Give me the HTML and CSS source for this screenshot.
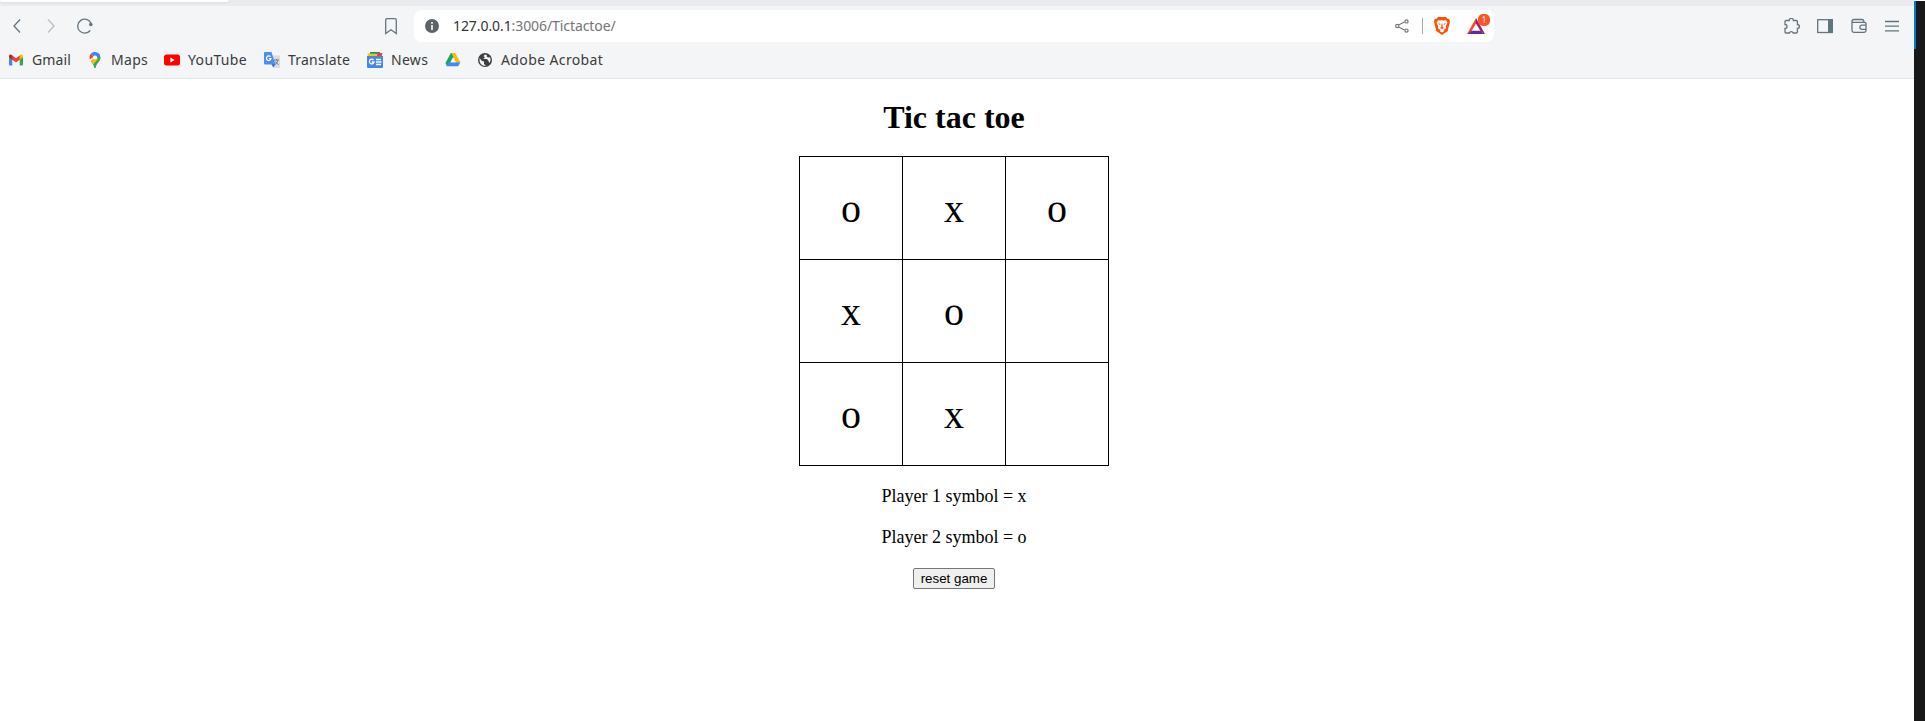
FILE: index.html
```html
<!DOCTYPE html>
<html lang="en">
<head>
<meta charset="utf-8">
<title>Tic tac toe</title>
<link rel="stylesheet" href="styles.css">
</head>
<body>
<div class="screen">
  <div class="window">
    <div class="tabstrip"><div class="tab"></div></div>
    <div class="toolbar">
      <div class="nav">
        <svg class="ic" width="8" height="16" viewBox="0 0 8 16"><path d="M7 1.500 1 8l6 6.500"/></svg>
        <svg class="ic faded" width="8" height="16" viewBox="0 0 8 16"><path d="M1 1.500l6 6.500-6 6.500"/></svg>
        <svg class="ic" width="17" height="16" viewBox="0 0 17 16"><path d="M13.200 12.500A7 7 0 1 1 14 5"/><circle class="solid" cx="13.800" cy="6.500" r="1.800"/></svg>
      </div>
      <svg class="ic save" width="12" height="17" viewBox="0 0 12 17"><path d="M.7 2.200q0-1.500 1.500-1.500h7.600q1.500 0 1.500 1.500V15.500L6 11.700.7 15.500z"/></svg>
      <div class="address">
        <svg class="info" width="14" height="14" viewBox="0 0 14 14"><circle cx="7" cy="7" r="7" fill="#5f6368"/><path d="M7 6v5M7 3v1.700" stroke="#fff" stroke-width="1.600"/></svg>
        <div class="url"><span class="host">127.0.0.1</span>:3006/Tictactoe/</div>
        <svg class="share" width="14" height="14" viewBox="0 0 14 14"><path d="M3.500 6 9.500 3M3.500 8l6 3"/><circle cx="2.200" cy="7" r="1.600"/><circle cx="11.500" cy="2.400" r="1.600"/><circle cx="11.500" cy="11.600" r="1.600"/></svg>
        <div class="divider"></div>
        <svg class="brave" width="16" height="18" viewBox="0 0 16 18"><path fill="#ff5000" d="M4 0h8l1.500 1.800L15.200 2l.8 3-.6 2-1.600 7L8 18l-5.800-4L.6 7 0 5l.8-3 1.700-.2z"/><path fill="#fff" d="m4 3.200 2.500.4L8 3.300l1.500.3 2.500-.4L13.500 5.800l-1.700 3.400.4 2-2.700 1.800.8 1L8 15.400 5.700 14l.8-1-2.700-1.800.4-2-1.700-3.400z"/><path fill="#ff5000" d="m4 6.300 2.500.5-.5 1.300zM12 6.300l-2.500.5.500 1.300zM7.600 6.500h.8l.3 3.500 1.300.9-2 1-2-1 1.300-.9z"/></svg>
        <div class="rewards">
          <svg width="18" height="16" viewBox="0 0 18 16"><path fill="#ff4724" d="M9 0 0 16l4.500-3L9 5.500z"/><path fill="#9e1f63" d="m9 0 9 16-4.500-3L9 5.500z"/><path fill="#662d91" d="M0 16h18l-4.500-3.200h-9z"/></svg>
          <span class="badge">1</span>
        </div>
      </div>
      <div class="actions">
        <svg class="ic" width="16" height="16" viewBox="0 0 16 16"><path d="M1 3.500q0-1 1-1h3.200a2.100 2.100 0 0 1 4.200 0h3q1 0 1 1v3a2 2 0 0 1 0 4v3.500q0 1-1 1H9.200a2 2 0 0 0-3.800 0H2q-1 0-1-1v-3.500a2 2 0 0 0 0-4z"/></svg>
        <svg class="ic panel" width="16" height="16" viewBox="0 0 16 16"><rect x=".7" y="1.700" width="14.600" height="12.800"/><path class="solid" d="M11 1h5v14h-5z"/></svg>
        <svg class="ic" width="16" height="16" viewBox="0 0 16 16"><path d="M12.800 4.300V3.500q0-2-2-2H3q-2 0-2 2v9q0 1.800 1.800 1.800h10.400q1.800 0 1.800-1.800V5.800q0-1.500-1.500-1.500H1.300M15 7.200h-4a2.100 2.100 0 0 0 0 4.200h4"/></svg>
        <svg class="ic" width="14" height="16" viewBox="0 0 14 16"><path d="M0 3.500h14M0 8.200h14M0 12.800h14"/></svg>
      </div>
    </div>
    <div class="bookmarks">
      <div class="bm gmail">
        <svg width="16" height="16" viewBox="0 0 16 16"><path fill="#4285f4" d="M1 4l3.300 2.500V13.500H2q-1 0-1-1z"/><path fill="#34a853" d="M15 4l-3.300 2.500V13.500H14q1 0 1-1z"/><path fill="#ea4335" d="M4 3.200 8 6.200l4-3v4.300l-4 3-4-3z"/><path fill="#c5221f" d="M1 4.500c0-2.200 1.700-2.500 3.300-1.100v4.300L1 5.300z"/><path fill="#fbbc04" d="M15 4.500c0-2.200-1.700-2.500-3.300-1.100v4.300L15 5.300z"/></svg>
        <span>Gmail</span>
      </div>
      <div class="bm maps">
        <svg width="14" height="16" viewBox="0 0 14 16"><path fill="#34a853" d="M12.500 5.500c0 4-4 5.500-4.700 10q-.3 1-.8 1t-.8-1C5.900 12.500 4 11 2.800 9.200l8.700-7z"/><path fill="#fbbc04" d="M2.800 9.200 8.500 3.500 10 7l-4.600 5.300z"/><path fill="#ea4335" d="M2.800 1.800 6 4.500 1.900 7.500C1.200 5 1.500 3.300 2.800 1.800z"/><path fill="#4285f4" d="M2.800 1.800C5-.8 10.400-.6 12 3.200L8.500 7 5 4z"/><circle cx="7" cy="5.500" r="2.100" fill="#fff"/></svg>
        <span>Maps</span>
      </div>
      <div class="bm youtube">
        <svg width="16" height="16" viewBox="0 0 16 16"><rect y="2.500" width="16" height="11" rx="2.500" fill="red"/><path fill="#fff" d="m6.400 5.600 4.200 2.400-4.200 2.400z"/></svg>
        <span>YouTube</span>
      </div>
      <div class="bm translate">
        <svg width="16" height="16" viewBox="0 0 16 16"><path fill="#dadce0" d="M7 3.500h8q1 0 1 1V15q0 1-1 1H9.500z"/><path fill="#3a5bc0" d="M7.500 12h4L9.300 15.500z"/><path fill="#4e8df5" d="M1 0h6.500l4 12.500H1q-1 0-1-1V1q0-1 1-1z"/><path fill="none" stroke="#fff" stroke-width="1.200" d="M6.500 4.700A2.300 2.300 0 1 0 7 6.700H4.800"/><path fill="none" stroke="#747b83" d="M10 8h5M12.500 7v1M14 8q-.5 3-3 4.500M11.500 9.500q1 2 3 3"/></svg>
        <span>Translate</span>
      </div>
      <div class="bm news">
        <svg width="16" height="16" viewBox="0 0 16 16"><path fill="#0c9d58" d="M3 0h10v5H3z"/><path fill="#ea4335" d="M10 1h5.500L14.500 5H9z"/><path fill="#ffc107" d="M.5 1.500 10 1.800V5H1z"/><path fill="#4285f4" d="M0 4h16v11q0 1-1 1H1q-1 0-1-1z"/><path fill="none" stroke="#fff" stroke-width="1.300" d="M6.500 8A2.300 2.300 0 1 0 7 10H4.800M9 7.500h5M9 10h5.500M9 12.500h5"/></svg>
        <span>News</span>
      </div>
      <div class="bm drive">
        <svg width="16" height="16" viewBox="0 0 16 16"><path fill="#1ea362" d="M5.500 1.500q.4-.5 1-.5h2L9 4.500 4 14.300l-2.500-.8-1-2.500z"/><path fill="#ffba00" d="M6.500 1h3q.6 0 1 .6l4.800 8.600h-4.500z"/><path fill="#4688f4" d="M3.500 10.200h11.800l-1.800 3.500q-.4.600-1 .6H2.300q-.5-.1-.8-.6z"/><path fill="#fff" d="m8 5.500 2.700 4.700H5.300z"/></svg>
      </div>
      <div class="bm adobe">
        <svg width="16" height="16" viewBox="0 0 16 16"><circle cx="8" cy="8" r="7" fill="#3c4043"/><path fill="#f3f5f7" d="M2.500 6 5 9l2 .5V12l2 1.500q-4.500 1-6.300-3.500zM8 2.500 6.500 4 8 5.500 6 7h4l1.500 2 1 2.200q2-3 .6-6L11 5.500 9.500 4.200 10 3z"/></svg>
        <span>Adobe Acrobat</span>
      </div>
    </div>
    <main class="page">
      <h1>Tic tac toe</h1>
      <div class="board">
        <div class="cell">o</div><div class="cell">x</div><div class="cell">o</div>
        <div class="cell">x</div><div class="cell">o</div><div class="cell"></div>
        <div class="cell">o</div><div class="cell">x</div><div class="cell"></div>
      </div>
      <p>Player 1 symbol = x</p>
      <p>Player 2 symbol = o</p>
      <button class="reset">reset game</button>
    </main>
  </div>
  <div class="edge"><div class="edge-mark"></div></div>
</div>
</body>
</html>
```
FILE: styles.css
```css
* { box-sizing: border-box; }
body { margin: 0; background: #fff; overflow: hidden; }
svg { display: block; flex: none; }
.screen { display: flex; width: 1925px; height: 721px; }
.window { width: 1914px; display: flex; flex-direction: column; }
.tabstrip { height: 6px; background: #e9ebef; }
.tab { width: 229px; height: 2px; background: #fff; border-radius: 0 0 4px 4px; box-shadow: 0 0 3px #cfd2d6; }
.toolbar { height: 40px; background: #f3f5f7; display: flex; align-items: center; }
.nav { display: flex; align-items: center; width: 380px; padding-left: 13px; gap: 26px; }
.nav .ic:last-child { margin-left: -4px; }
.ic { fill: none; stroke: #62757e; stroke-width: 1.3; }
.ic .solid { fill: #62757e; stroke: none; }
.faded { opacity: .4; }
.save { margin-left: 5px; margin-right: 17px; }
.address { width: 1080px; height: 32px; background: #fff; border-radius: 8px; display: flex; align-items: center; padding-left: 11px; font: 14px "Noto Sans", sans-serif; color: #757575; }
.url { margin-left: 14px; width: 942px; letter-spacing: -.08px; padding-bottom: 1px; }
.host { color: #333; }
.share { fill: none; stroke: #777; stroke-width: 1.2; }
.divider { width: 1px; height: 16px; background: #aaa; margin: 0 11px 0 13px; }
.rewards { position: relative; margin-left: 17px; }
.badge { position: absolute; left: 11px; top: -4px; width: 12px; height: 12px; border-radius: 5px; background: #fb542b; color: #fff; font: 8px/12px "Noto Sans", sans-serif; text-align: center; }
.actions { display: flex; align-items: center; margin-left: 290px; gap: 18px; }
.panel { margin-left: -1px; }
.bookmarks { height: 33px; background: #f3f5f7; border-bottom: 1px solid #e4e7ea; display: flex; padding: 0 0 5px 8px; }
.bm { display: flex; align-items: center; gap: 8px; font: 14px "Noto Sans", sans-serif; color: #3b3b3b; letter-spacing: .15px; white-space: nowrap; }
.gmail { width: 80px; }
.maps { width: 76px; gap: 9px; letter-spacing: .3px; }
.youtube { width: 100px; letter-spacing: .35px; }
.translate { width: 103px; letter-spacing: .22px; }
.news { width: 78px; letter-spacing: .3px; }
.drive { width: 32px; }
.adobe { letter-spacing: .38px; }
.page { width: 1908px; display: flex; flex-direction: column; align-items: center; font-family: "Liberation Serif", serif; color: #000; }
h1 { margin: 20px 0; font-size: 32px; line-height: 37px; }
.board { display: grid; grid-template-columns: repeat(3, 103px); grid-template-rows: repeat(3, 103px); border: solid #000; border-width: 1px 0 0 1px; }
.cell { border: solid #000; border-width: 0 1px 1px 0; display: flex; align-items: center; justify-content: center; padding-top: 2px; font-size: 40px; line-height: 46px; }
p { margin: 20px 0 0; font-size: 18px; line-height: 21px; }
.reset { margin-top: 20px; width: 82px; height: 21px; padding: 0; border: 1px solid #767676; border-radius: 2px; background: #efefef; color: #000; font: 13.333px "Liberation Sans", sans-serif; }
.edge { width: 11px; margin-top: 1px; background: #181818; }
.edge-mark { width: 2px; height: 48px; background: #0078d4; }
```
